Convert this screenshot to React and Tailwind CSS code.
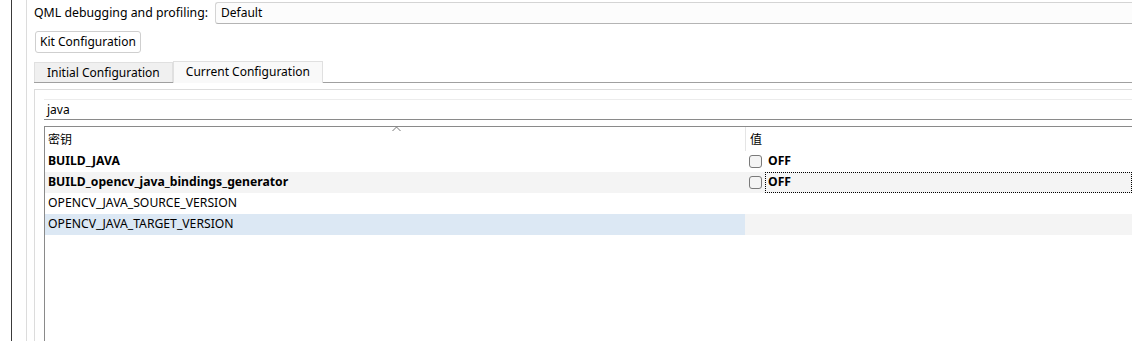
import React from "react";

const font = { fontFamily: '"Noto Sans", "Noto Sans CJK SC", sans-serif' };

const rows = [
  { key: "BUILD_JAVA", bold: true, check: true },
  { key: "BUILD_opencv_java_bindings_generator", bold: true, check: true, alt: true, focus: true },
  { key: "OPENCV_JAVA_SOURCE_VERSION" },
  { key: "OPENCV_JAVA_TARGET_VERSION", selected: true },
];

function Checkbox() {
  return <span className="inline-block w-[13px] h-[13px] rounded-[3px] border border-[#7a7a7a] bg-[#f4f4f4] shrink-0" />;
}

function Row({ r }) {
  return (
    <div className={`flex h-[21px] text-[12.2px] text-black ${r.alt ? "bg-[#f4f4f4]" : ""}`}>
      <div className={`w-[700px] shrink-0 pl-[3px] flex items-center ${r.bold ? "font-bold" : ""} ${r.selected ? "bg-[#dce8f4]" : ""}`}>
        {r.key}
      </div>
      <div className={`flex-1 flex items-center pl-[4px] ${r.selected ? "bg-[#f4f4f4]" : ""}`}>
        {r.check && (
          <>
            <Checkbox />
            <span className={`ml-[3px] h-full flex-1 flex items-center font-bold pl-[2px] ${r.focus ? "border border-dotted border-black" : "border border-transparent"}`}>
              OFF
            </span>
          </>
        )}
      </div>
    </div>
  );
}

export default function App() {
  return (
    <div className="w-[1132px] h-[341px] overflow-hidden bg-white flex" style={font}>
      <div className="w-[11px] shrink-0" />
      <div className="border-l border-[#3a3a3a] w-[15px] shrink-0" />
      <div className="border-l border-[#dcdcdc] pl-[7px] flex-1 flex flex-col min-w-0">
        <div className="flex items-center mt-[2px] h-[22px]">
          <span className="text-[12.3px] text-black w-[181px] shrink-0">QML debugging and profiling:</span>
          <div className="flex-1 h-[22px] bg-[#fcfcfc] border-t border-b border-l border-t-[#d4d4d4] border-l-[#d4d4d4] border-b-[#b4b4b4] rounded-l-[3px] flex items-center pl-[5px] text-[12px]">
            Default
          </div>
        </div>
        <div className="mt-[7px] ml-[1px] flex">
          <button className="h-[22px] px-[4px] bg-white border border-[#cfcfcf] rounded-[3px] text-[12px] text-black leading-none" style={font}>
            Kit Configuration
          </button>
        </div>
        <div className="flex items-end mt-[7px] h-[23px] border-b border-[#a0a0a0]">
          <div className="h-[20px] px-[12px] bg-[#f0f0f0] border border-b-0 border-[#e0e0e0] flex items-center text-[12px]">
            Initial Configuration
          </div>
          <div className="h-[22px] px-[12px] bg-[#f9f9f9] border border-b-0 border-[#e0e0e0] flex items-center text-[12px] -mb-px pb-px">
            Current Configuration
          </div>
        </div>
        <div className="mt-[6px] flex-1 border-t border-l border-[#dcdcdc] pl-[9px] pt-[9px] flex flex-col">
          <div className="h-[21px] border-t border-[#ececec] border-b border-b-[#8a8a8a] flex items-center pl-[3px] text-[12px]">
            java
          </div>
          <div className="mt-[6px] flex-1 border-t border-l border-[#8a8a8a] flex flex-col">
            <div className="flex h-[24px] text-[12px] relative">
              <div className="w-[700px] shrink-0 pl-[3px] flex items-center pt-[2px]">密钥</div>
              <div className="flex-1 border-l border-[#e5e5e5] flex items-center pl-[4px] pt-[2px]">值</div>
              <svg className="absolute left-[347px] top-[-1px]" width="9" height="6" viewBox="0 0 9 6">
                <path d="M0.5 5 L4.5 1 L8.5 5" fill="none" stroke="#777" strokeWidth="1" />
              </svg>
            </div>
            {rows.map((r) => (
              <Row key={r.key} r={r} />
            ))}
          </div>
        </div>
      </div>
    </div>
  );
}
